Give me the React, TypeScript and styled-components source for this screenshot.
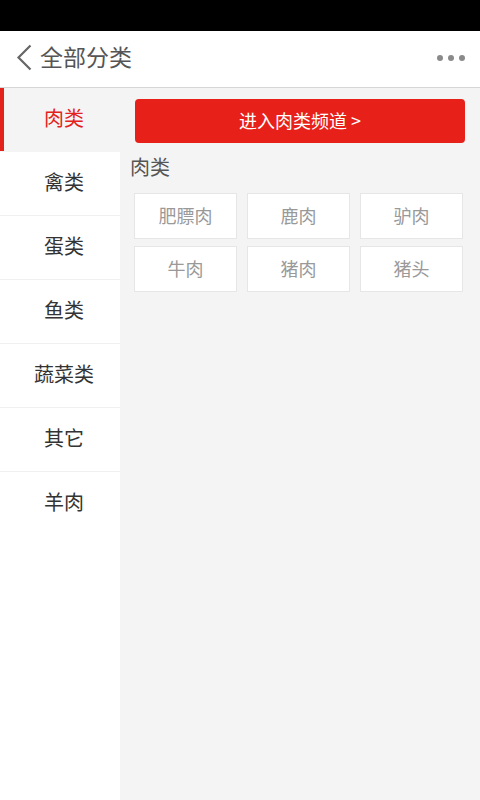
import styled, { createGlobalStyle } from "styled-components";

const GlobalStyle = createGlobalStyle`
  html, body {
    margin: 0;
    padding: 0;
    background: #f4f4f4;
  }
  body {
    font-family: "Noto Sans CJK SC", "Noto Sans", sans-serif;
  }
  * { box-sizing: border-box; }
`;

const Page = styled.div`
  width: 480px;
  height: 800px;
  display: flex;
  flex-direction: column;
  overflow: hidden;
`;

const StatusBar = styled.div`
  height: 31px;
  background: #000;
  flex-shrink: 0;
`;

const Header = styled.div`
  height: 57px;
  background: #fff;
  border-bottom: 1px solid #d6d6d6;
  display: flex;
  align-items: center;
  padding: 0 15px 0 16px;
  flex-shrink: 0;
`;

const BackButton = styled.div`
  width: 16px;
  height: 30px;
  display: flex;
  align-items: center;
  margin-right: 8px;
  padding-bottom: 3px;
`;

const Title = styled.div`
  flex: 1;
  font-size: 23px;
  color: #555;
  line-height: 1;
  padding-bottom: 5px;
`;

const Dots = styled.div`
  display: flex;
  gap: 5px;
  padding-bottom: 2px;
`;

const Dot = styled.span`
  width: 6px;
  height: 6px;
  border-radius: 50%;
  background: #8a8a8a;
`;

const Body = styled.div`
  flex: 1;
  display: flex;
`;

const Sidebar = styled.div`
  width: 120px;
  background: #fff;
  display: flex;
  flex-direction: column;
`;

const SideItem = styled.div<{ $active?: boolean }>`
  height: 64px;
  display: flex;
  align-items: center;
  justify-content: center;
  font-size: 20px;
  color: ${(p) => (p.$active ? "#e3221c" : "#333")};
  background: ${(p) => (p.$active ? "#f4f4f4" : "#fff")};
  box-shadow: ${(p) => (p.$active ? "inset 4px 0 0 #e3221c" : "none")};
  border-bottom: 1px solid ${(p) => (p.$active ? "#f4f4f4" : "#f0f0f0")};
  padding: 0 0 4px 8px;
  &:last-child { border-bottom-color: transparent; }
`;

const Content = styled.div`
  flex: 1;
  padding: 11px 15px 0 10px;
`;

const ChannelButton = styled.div`
  height: 44px;
  margin-left: 5px;
  background: #e8201a;
  border-radius: 4px;
  color: #fff;
  font-size: 18px;
  display: flex;
  align-items: center;
  justify-content: center;
  padding-bottom: 2px;
`;

const SectionTitle = styled.div`
  font-size: 20px;
  color: #555;
  margin: 10px 0 0 0;
  height: 28px;
  line-height: 28px;
`;

const Grid = styled.div`
  display: grid;
  grid-template-columns: repeat(3, 1fr);
  column-gap: 10px;
  row-gap: 7px;
  margin: 12px 2px 0 4px;
`;

const Tile = styled.div`
  height: 46px;
  background: #fff;
  border: 1px solid #e6e6e6;
  display: flex;
  align-items: center;
  justify-content: center;
  font-size: 18px;
  color: #999;
  padding-bottom: 2px;
`;

const categories = ["肉类", "禽类", "蛋类", "鱼类", "蔬菜类", "其它", "羊肉"];
const items = ["肥膘肉", "鹿肉", "驴肉", "牛肉", "猪肉", "猪头"];

export default function App() {
  return (
    <Page>
      <GlobalStyle />
      <StatusBar />
      <Header>
        <BackButton>
          <svg width="16" height="27" viewBox="0 0 16 27">
            <path d="M14.5 1.5 L2.5 13.5 L14.5 25.5" fill="none" stroke="#666" strokeWidth="2.2" />
          </svg>
        </BackButton>
        <Title>全部分类</Title>
        <Dots>
          <Dot />
          <Dot />
          <Dot />
        </Dots>
      </Header>
      <Body>
        <Sidebar>
          {categories.map((c, i) => (
            <SideItem key={c} $active={i === 0}>
              {c}
            </SideItem>
          ))}
        </Sidebar>
        <Content>
          <ChannelButton>进入肉类频道 &gt;</ChannelButton>
          <SectionTitle>肉类</SectionTitle>
          <Grid>
            {items.map((it) => (
              <Tile key={it}>{it}</Tile>
            ))}
          </Grid>
        </Content>
      </Body>
    </Page>
  );
}
